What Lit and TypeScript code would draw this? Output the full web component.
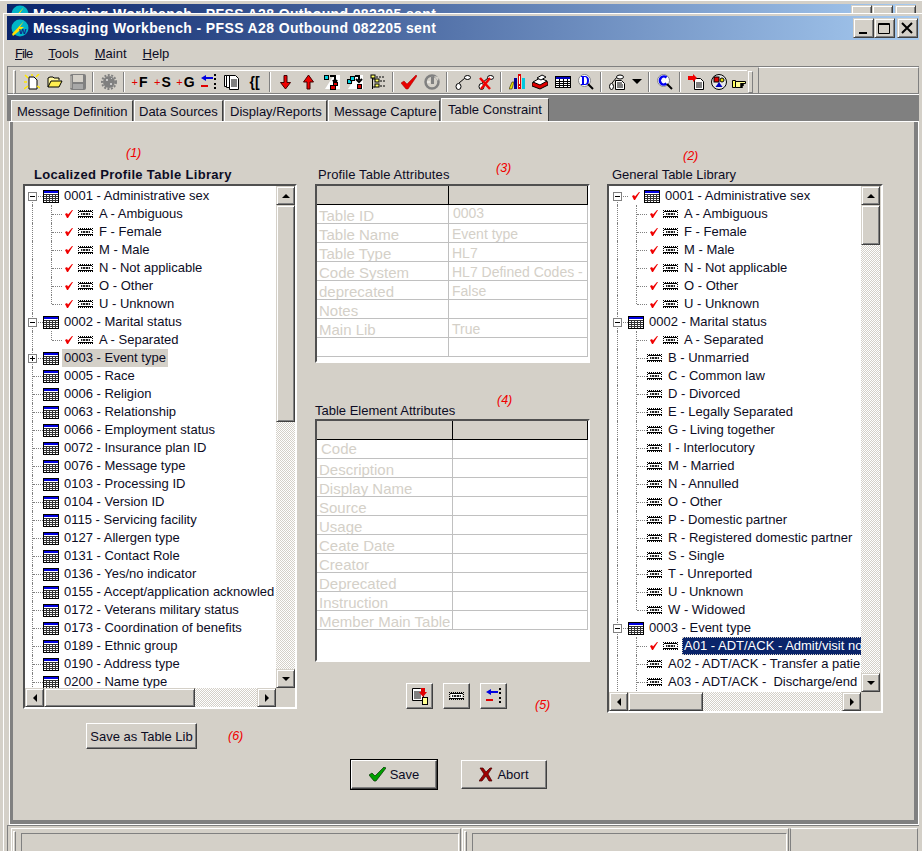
import { LitElement, css, html, svg } from "lit";
import { customElement } from "lit/decorators.js";

const tableIcon = () => html`<svg class="ico" width="16" height="13" viewBox="0 0 16 13">
  <rect x=".5" y=".5" width="15" height="12" fill="#fff" stroke="#000" />
  <rect x="1" y="1" width="14" height="2" fill="#0000e0" />
  <path d="M1 4.5h14M1 6.5h14M1 8.5h14M1 10.5h14M3.5 4v8M6.5 4v8M9.5 4v8M12.5 4v8" stroke="#333" fill="none" />
</svg>`;

const itemIcon = () => html`<svg class="ico" width="15" height="8" viewBox="0 0 15 8">
  <path d="M0 .5h15M0 7.5h15M.5 0v8M14.5 0v8" stroke="#000" stroke-dasharray="1 1" fill="none" />
  <rect x="1" y="1" width="13" height="1" fill="#000" />
  <rect x="1" y="6" width="13" height="1" fill="#000" />
  <rect x="2" y="2" width="11" height="4" fill="#fff" />
  <rect x="3" y="3" width="9" height="2" fill="#222" />
  <path d="M4.5 3v2M7.5 3v2M10.5 3v2" stroke="#bbb" />
</svg>`;

const checkIcon = () => html`<svg class="ico" width="8" height="8" viewBox="0 0 8 8">
  <path d="M0 4l2-1 1 1.500L7 0h1L3 8H2z" fill="#f00000" />
</svg>`;

const appIcon = () => html`<svg class="app" width="18" height="18" viewBox="0 0 18 18">
  <circle cx="9" cy="9" r="8.500" fill="#00b4c8" />
  <path d="M1 15L13 2 9 8l4 0L2 17z" fill="#ffe000" />
  <text x="8" y="15" font-size="8" font-weight="700" fill="#102080" font-family="Liberation Sans">W</text>
</svg>`;

type Row = {
  label: string;
  level: 0 | 1;
  box?: "+" | "-";
  check?: boolean;
  cls?: string;
  last?: boolean;
};

const group = (label: string, box: "+" | "-" | undefined = undefined, check = false): Row => ({ label, level: 0, box, check });
const leaf = (label: string, check = false, last = false, cls = ""): Row => ({ label, level: 1, check, last, cls });

const leftRows: Row[] = [
  group("0001 - Administrative sex", "-"),
  leaf("A - Ambiguous", true),
  leaf("F - Female", true),
  leaf("M - Male", true),
  leaf("N - Not applicable", true),
  leaf("O - Other", true),
  leaf("U - Unknown", true, true),
  group("0002 - Marital status", "-"),
  leaf("A - Separated", true, true),
  { ...group("0003 - Event type", "+"), cls: "current" },
  ...[
    "0005 - Race",
    "0006 - Religion",
    "0063 - Relationship",
    "0066 - Employment status",
    "0072 - Insurance plan ID",
    "0076 - Message type",
    "0103 - Processing ID",
    "0104 - Version ID",
    "0115 - Servicing facility",
    "0127 - Allergen type",
    "0131 - Contact Role",
    "0136 - Yes/no indicator",
    "0155 - Accept/application acknowled",
    "0172 - Veterans military status",
    "0173 - Coordination of benefits",
    "0189 - Ethnic group",
    "0190 - Address type",
    "0200 - Name type",
  ].map((l) => group(l)),
];

const rightRows: Row[] = [
  group("0001 - Administrative sex", "-", true),
  leaf("A - Ambiguous", true),
  leaf("F - Female", true),
  leaf("M - Male", true),
  leaf("N - Not applicable", true),
  leaf("O - Other", true),
  leaf("U - Unknown", true, true),
  group("0002 - Marital status", "-"),
  leaf("A - Separated", true),
  leaf("B - Unmarried"),
  leaf("C - Common law"),
  leaf("D - Divorced"),
  leaf("E - Legally Separated"),
  leaf("G - Living together"),
  leaf("I - Interlocutory"),
  leaf("M - Married"),
  leaf("N - Annulled"),
  leaf("O - Other"),
  leaf("P - Domestic partner"),
  leaf("R - Registered domestic partner"),
  leaf("S - Single"),
  leaf("T - Unreported"),
  leaf("U - Unknown"),
  leaf("W - Widowed", false, true),
  group("0003 - Event type", "-"),
  leaf("A01 - ADT/ACK - Admit/visit no", true, false, "selected"),
  leaf("A02 - ADT/ACK - Transfer a patie"),
  leaf("A03 - ADT/ACK - \u00a0Discharge/end"),
];

const profileAttrs = [
  ["Table ID", "0003"],
  ["Table Name", "Event type"],
  ["Table Type", "HL7"],
  ["Code System", "HL7 Defined Codes -"],
  ["deprecated", "False"],
  ["Notes", ""],
  ["Main Lib", "True"],
  ["", ""],
];

const elementAttrs = [
  "Code",
  "Description",
  "Display Name",
  "Source",
  "Usage",
  "Ceate Date",
  "Creator",
  "Deprecated",
  "Instruction",
  "Member Main Table",
];

// every toolbar glyph is drawn on the same 16 box and centred in a 23px slot
const tool = (body: unknown) => html`<span class="slot"><svg width="16" height="16" viewBox="0 0 16 16">${body}</svg></span>`;

const moveIcon = svg`
  <path d="M0 4l5-3v2h7v2H5v2z" fill="#0000e0" />
  <rect x="0" y="11" width="7" height="2" fill="#e00000" />
  <path d="M13 0h2v2h-2zM13 4h2v2h-2zM13 9h2v2h-2zM13 13h2v2h-2z" fill="#000" />`;

@customElement("app-root")
export class AppRoot extends LitElement {
  private tree(rows: Row[], kind: "left" | "right") {
    return html`
      <div class="sunken tree-frame ${kind}">
        <div class="tree-view">
          ${rows.map((r, i) => {
            const nested = r.level === 1;
            return html`<div class="row ${nested ? "nested" : ""} ${r.last ? "last" : ""} ${i === 0 ? "first" : ""}">
              <span class="rail"></span>
              ${nested ? html`<span class="rail2"></span>` : ""}
              <span class="lead">
                ${r.box ? html`<span class="box">${r.box === "-" ? html`<i></i>` : html`<i></i><b></b>`}</span>` : ""}
              </span>
              ${r.check ? html`<span class="chk">${checkIcon()}</span>` : ""}
              ${nested ? itemIcon() : tableIcon()}
              <span class="label ${r.cls ?? ""}">${r.label}</span>
            </div>`;
          })}
        </div>
        <div class="vbar">
          <button class="arrow"><span class="up"></span></button>
          <div class="vtrack"><div class="thumb"></div></div>
          <button class="arrow"><span class="down"></span></button>
        </div>
        <div class="hbar">
          <button class="arrow"><span class="lft"></span></button>
          <div class="htrack"><div class="thumb"></div></div>
          <button class="arrow"><span class="rgt"></span></button>
        </div>
      </div>
    `;
  }

  private toolbar() {
    return html`
      <div class="toolbar">
        <span class="grip"></span>
        <div class="tools">
          ${tool(svg`
            <path d="M5 3h5l3 3v9H5z" fill="#fff" stroke="#000" />
            <path d="M1 1l3 3M15 0l-3 3M0 15l4-3M16 14l-3-2M0 8h3M8 0v2" stroke="#ffe800" stroke-width="1.500" />`)}
          ${tool(svg`
            <path d="M1 13V4l2-1h3l1 1h5v2" fill="#fff7a0" stroke="#000" />
            <path d="M1 13l3-6h11l-3 6z" fill="#ffee50" stroke="#000" />`)}
          ${tool(svg`
            <rect x="0" y="0" width="16" height="16" rx="2" fill="#808080" />
            <rect x="3" y="1" width="10" height="7" fill="#d4d0c8" />
            <rect x="3" y="10" width="10" height="5" fill="#a8a8a8" />
            <path d="M1 2v12" stroke="#d4d0c8" />`)}
          <span class="sep"></span>
          ${tool(svg`
            <circle cx="8" cy="8" r="6" fill="#808080" />
            <circle cx="8" cy="8" r="7" fill="none" stroke="#808080" stroke-width="2" stroke-dasharray="2 1.500" />
            <path d="M5 5h2v2H5zM9 9h2v2H9zM10 4h1v1h-1z" fill="#c8c8c8" />`)}
          <span class="sep"></span>
          <span class="slot tx"><em>+</em>F</span>
          <span class="slot tx"><em>+</em>S</span>
          <span class="slot tx"><em>+</em>G</span>
          ${tool(moveIcon)}
          ${tool(svg`
            <path d="M.5 1.500h7v11h-7z" fill="#fff" stroke="#000" />
            <path d="M2.500 1.500h7v12h-7z" fill="#fff" stroke="#000" />
            <path d="M5.500 1.500h6l3 3v11h-9z" fill="#fff" stroke="#000" />
            <path d="M7 6h6M7 8h6M7 10h6M7 12h6" stroke="#000" />`)}
          <span class="slot tx brace">{[</span>
          <span class="sep"></span>
          ${tool(svg`<path d="M6 1.500h3v7h3.500L7.500 15 2.500 8.500H6z" fill="#f00000" stroke="#400000" />`)}
          ${tool(svg`<path d="M6 15h3V8h3.500L7.500 1 2.500 8H6z" fill="#f00000" stroke="#400000" />`)}
          ${tool(svg`
            <path d="M10 1h6v14H1z" fill="#fff" />
            <rect x=".5" y="1.500" width="4" height="4" fill="#00d0e0" stroke="#000" />
            <path d="M6 2h5v5M9 6l2 3 2-3" fill="none" stroke="#000" stroke-width="2" />
            <rect x="9.500" y="8.500" width="4" height="3" fill="#e00000" stroke="#000" />
            <rect x="6.500" y="11.500" width="5" height="4" fill="#e00000" stroke="#000" />`)}
          ${tool(svg`
            <path d="M10 1h6v14H1z" fill="#fff" />
            <rect x=".5" y="5.500" width="4" height="4" fill="#00d0e0" stroke="#000" />
            <rect x="3.500" y="2.500" width="4" height="4" fill="#00d0e0" stroke="#000" />
            <path d="M8 2h4v4M9 5l3 3 3-3" fill="none" stroke="#000" stroke-width="2" />
            <rect x="10.500" y="10.500" width="4" height="4" fill="#e00000" stroke="#000" />`)}
          ${tool(svg`
            <path d="M2.500 1v14M2 5h3M2 13h3" stroke="#000" fill="none" />
            <rect x="1" y="1" width="4" height="3" fill="#ffff60" stroke="#000" />
            <rect x="5" y="5" width="4" height="3" fill="#ffff60" stroke="#000" />
            <rect x="5" y="10" width="4" height="3" fill="#ffff60" stroke="#000" />
            <path d="M6 3h9M10 7h6M10 12h6" stroke="#000" stroke-dasharray="2 1" />`)}
          <span class="sep"></span>
          ${tool(svg`<path d="M0 9l3-2 3 3L15 1l1 1L7 15H5z" fill="#e80000" stroke="#a00000" stroke-width=".5" />`)}
          ${tool(svg`
            <circle cx="8" cy="8" r="6.500" fill="#d4d0c8" stroke="#808080" stroke-width="2.500" />
            <path d="M7 3h3v7H7z" fill="#808080" />
            <path d="M10 2l5 1-1 4z" fill="#d4d0c8" />
            <path d="M3 8h3" stroke="#fff" />`)}
          <span class="sep"></span>
          ${tool(svg`
            <ellipse cx="3.500" cy="12.500" rx="2.500" ry="3" fill="#fff" stroke="#000" />
            <path d="M4 9l6-5" stroke="#000" />
            <ellipse cx="12.500" cy="3.500" rx="3" ry="2" fill="#fff" stroke="#000" />`)}
          ${tool(svg`
            <ellipse cx="3.500" cy="12.500" rx="2.500" ry="3" fill="#fff" stroke="#000" />
            <path d="M4 9l6-5" stroke="#000" />
            <ellipse cx="12.500" cy="3.500" rx="3" ry="2" fill="#fff" stroke="#000" />
            <path d="M2 4l10 11M12 4L3 15" stroke="#f00000" stroke-width="2.500" />`)}
          <span class="sep"></span>
          ${tool(svg`
            <path d="M0 15l3-7h2l-2 7z" fill="#e8e000" stroke="#000" stroke-width=".5" />
            <rect x="5" y="4" width="3" height="11" fill="#000090" />
            <rect x="9" y="0" width="3" height="15" fill="#e00000" />
            <path d="M10.500 2v8M10.500 12v1" stroke="#fff" />
            <rect x="13" y="4" width="3" height="11" fill="#00c8e0" />`)}
          ${tool(svg`
            <path d="M0 9l7-3 9 2v3l-8 4-8-3z" fill="#e00000" stroke="#000" />
            <path d="M1 8l7-4 7 3-7 4z" fill="#fff" stroke="#000" />
            <path d="M5 4l5-3 4 2-5 3z" fill="#fff" stroke="#000" />`)}
          ${tool(svg`
            <rect x=".5" y="2.500" width="15" height="11" fill="#fff" stroke="#000" />
            <rect x="1" y="3" width="14" height="2" fill="#0000c0" />
            <path d="M1 7.500h14M1 9.500h14M1 11.500h14M4.500 5v8M8.500 5v8M12.500 5v8" stroke="#000" />`)}
          ${tool(svg`
            <circle cx="6.500" cy="6.500" r="6" fill="#fff" stroke="#888" />
            <path d="M10 10l5 5" stroke="#000" stroke-width="2" />
            <path d="M3 2h4q4 0 4 4.500T7 11H3V10h1V3H3zM6 3v7h1q2 0 2-3.500T7 3z" fill="#0000f0" />`)}
          <span class="sep"></span>
          ${tool(svg`
            <ellipse cx="2.500" cy="12.500" rx="2" ry="3" fill="#fff" stroke="#000" />
            <path d="M3 9l5-6" stroke="#000" />
            <ellipse cx="11" cy="3" rx="3.500" ry="2" fill="#fff" stroke="#000" />
            <path d="M6.500 6.500h6l3 3v6h-9z" fill="#fff" stroke="#000" />
            <path d="M8 9h5M8 11h6M8 13h6" stroke="#000" />`)}
          <span class="caret-slot"><span class="caret"></span></span>
          <span class="sep"></span>
          ${tool(svg`
            <circle cx="6.500" cy="6.500" r="6" fill="#fff" stroke="#888" />
            <path d="M9.500 3.500a4 4 0 1 0 0 6" fill="none" stroke="#0000f0" stroke-width="2.500" />
            <path d="M10 10l5 5" stroke="#000" stroke-width="2" />`)}
          <span class="sep"></span>
          ${tool(svg`
            <path d="M6.500 4.500h6l3 3v8h-9z" fill="#fff" stroke="#000" />
            <path d="M8 9h6M8 11h6M8 13h6" stroke="#000" />
            <path d="M0 2h5V0l4 4-4 4V6H0z" fill="#f00000" />`)}
          ${tool(svg`
            <circle cx="8" cy="8" r="7.500" fill="#e8e8e8" stroke="#000" />
            <rect x="3" y="3" width="5" height="5" fill="#e00000" stroke="#000" />
            <circle cx="11" cy="6" r="2" fill="#e8e000" stroke="#000" />
            <path d="M8 8l3.500 5h-7z" fill="#0000c0" />`)}
          <span class="slot last">
            <svg width="16" height="16" viewBox="0 0 16 16">
              <path d="M1.500 6.500h3v7h-3z" fill="#ffff60" stroke="#000" />
              <path d="M4.500 7.500h10v2h-5v1h3v1h-3v1h2v1h-7z" fill="#ffff90" stroke="#000" />
            </svg>
          </span>
        </div>
        <span class="handle"></span>
        <div class="toolbar-rest"></div>
      </div>
    `;
  }

  private windowButtons(withGlyphs: boolean) {
    if (!withGlyphs) return html`<span class="capbtns"><span class="cap"></span><span class="cap"></span><span class="cap close"></span></span>`;
    return html`<span class="capbtns">
      <span class="cap"><svg width="15" height="13" viewBox="0 0 15 13"><path d="M3 10h8v2H3z" /></svg></span>
      <span class="cap"><svg width="15" height="13" viewBox="0 0 15 13"><path d="M1.500 1.500h11v10h-11z M1 2.500h12" fill="none" stroke="#000" /></svg></span>
      <span class="cap close"><svg width="15" height="13" viewBox="0 0 15 13"><path d="M2 1l10 10M12 1L2 11" stroke="#000" stroke-width="2" /></svg></span>
    </span>`;
  }

  render() {
    const check = svg`<path d="M0 8l3-2 3 3L15 0l2 1L7 14H5z" fill="#00a000" stroke="#003000" stroke-width=".7" />`;
    const cross = svg`<path d="M1 1h3l3 4 4-4h2l-4 6 4 7h-3L7 9l-4 5H0l5-7z" fill="#a00000" stroke="#400000" stroke-width=".7" />`;
    return html`
      <div class="back">
        <div class="back-title">
          ${appIcon()}
          <span class="back-text">Messaging Workbench - PFSS A28 Outbound 082205 sent</span>
          ${this.windowButtons(false)}
        </div>
      </div>
      <div class="window">
        <div class="title">
          ${appIcon()}
          <span class="title-text">Messaging Workbench - PFSS A28 Outbound 082205 sent</span>
          ${this.windowButtons(true)}
        </div>
        <div class="menu">
          <span><u>F</u>ile</span><span><u>T</u>ools</span><span><u>M</u>aint</span><span><u>H</u>elp</span>
        </div>
        ${this.toolbar()}
        <div class="tabs">
          <span class="tab t-def">Message Definition</span>
          <span class="tab t-src">Data Sources</span>
          <span class="tab t-rep">Display/Reports</span>
          <span class="tab t-cap">Message Capture</span>
          <span class="tab active">Table Constraint</span>
        </div>
        <div class="panel">
          <div class="columns">
            <section class="col">
              <h3 class="bold">Localized Profile Table Library</h3>
              ${this.tree(leftRows, "left")}
              <button class="btn lib">Save as Table Lib</button>
            </section>
            <section class="col mid">
              <h3 class="t1">Profile Table Attributes</h3>
              <div class="sunken grid g1">
                <div class="gh"><span></span><span></span></div>
                ${profileAttrs.map(
                  ([a, b], i) => html`<div class="gr ${i === 0 ? "first" : ""}"><span>${a}</span><span>${b}</span></div>`
                )}
              </div>
              <h3 class="t2">Table Element Attributes</h3>
              <div class="sunken grid g2">
                <div class="gh"><span></span><span></span></div>
                ${elementAttrs.map((a, i) => html`<div class="gr ${i === 0 ? "first" : ""}"><span>${a}</span><span></span></div>`)}
              </div>
              <div class="minis">
                <button class="btn mini">
                  <svg width="18" height="18" viewBox="0 0 18 18">
                    <path d="M1.500 1.500h8l3 3v9h-11z" fill="#fff" stroke="#000" />
                    <path d="M3 5h7M3 7h7M3 9h7M3 11h7" stroke="#000" />
                    <path d="M10 1h4v4h2l-4 5-4-5h2z" fill="#e00000" />
                    <rect x="11.500" y="10.500" width="5" height="7" fill="#ffff90" stroke="#000" />
                  </svg>
                </button>
                <button class="btn mini">${itemIcon()}</button>
                <button class="btn mini"><svg width="16" height="16" viewBox="0 0 16 16">${moveIcon}</svg></button>
              </div>
            </section>
            <section class="col">
              <h3 class="t3">General Table Library</h3>
              ${this.tree(rightRows, "right")}
            </section>
          </div>
          <div class="actions">
            <button class="btn big default"><svg width="17" height="15" viewBox="0 0 17 15">${check}</svg>Save</button>
            <button class="btn big"><svg width="14" height="15" viewBox="0 0 14 15">${cross}</svg>Abort</button>
          </div>
          <span class="note n1">(1)</span>
          <span class="note n2">(2)</span>
          <span class="note n3">(3)</span>
          <span class="note n4">(4)</span>
          <span class="note n5">(5)</span>
          <span class="note n6">(6)</span>
        </div>
        <div class="status">
          <span class="cell a"><span class="cell-grip"></span><span class="cell-in"></span></span>
          <span class="cell b"><span class="cell-grip"></span><span class="cell-in"></span></span>
          <span class="cell c"></span>
        </div>
      </div>
    `;
  }

  static styles = css`
    :host {
      display: block;
      width: 922px;
      height: 851px;
      overflow: hidden;
      background: #d4d0c8;
      font-family: "Liberation Sans", Arial, sans-serif;
      font-size: 13px;
      color: #0c0c24;
    }

    button {
      font: inherit;
      color: inherit;
      margin: 0;
      padding: 0;
    }

    .back {
      height: 13px;
      padding: 3px 6px 0 7px;
      box-sizing: border-box;
      border-top: 1px solid #fff;
      overflow: hidden;
    }

    .back-title {
      display: flex;
      align-items: flex-start;
      gap: 4px;
      height: 24px;
      padding: 1px 0 0 4px;
      box-sizing: border-box;
      background: linear-gradient(90deg, #0a246a, #a6caf0);
    }

    .back-text,
    .title-text {
      flex: 1;
      color: #fff;
      font-weight: 700;
      font-size: 14px;
      letter-spacing: 0.37px;
      white-space: nowrap;
    }

    /* only the top of the window behind shows above the main window */
    .back-text {
      height: 7px;
      margin-top: 1px;
      line-height: 16px;
      overflow: hidden;
    }

    .app {
      flex: none;
    }

    .window {
      height: 838px;
      box-sizing: border-box;
      margin-left: 3px;
      padding: 2px 3px 0 3px;
      border-top: 1px solid #fff;
      border-left: 1px solid #fff;
      display: flex;
      flex-direction: column;
    }

    .title {
      display: flex;
      align-items: center;
      gap: 4px;
      height: 24px;
      flex: none;
      padding: 0 1px 0 4px;
      background: linear-gradient(90deg, #0a246a, #a6caf0);
    }

    .capbtns {
      display: flex;
      flex: none;
    }

    .cap {
      display: flex;
      align-items: center;
      justify-content: center;
      width: 21px;
      height: 20px;
      box-sizing: border-box;
      background: #d4d0c8;
      border: 1px solid;
      border-color: #d4d0c8 #404040 #404040 #d4d0c8;
      box-shadow: inset 1px 1px 0 #fff, inset -1px -1px 0 #808080;
    }

    .cap.close {
      margin-left: 2px;
    }

    .menu {
      display: flex;
      flex: none;
      height: 26px;
      align-items: center;
      gap: 16px;
      padding-left: 8px;
    }

    .menu span:first-child {
      letter-spacing: -0.9px;
    }

    .toolbar {
      display: flex;
      flex: none;
      height: 29px;
      box-sizing: border-box;
      padding-top: 3px;
      border-top: 1px solid #808080;
      border-left: 1px solid #808080;
      border-bottom: 1px solid #fff;
      box-shadow: inset 0 -1px 0 #808080;
    }

    .grip {
      flex: none;
      width: 1px;
      height: 22px;
      margin: 0 4px 0 5px;
      border: 1px solid;
      border-color: #fff #808080 #808080 #fff;
    }

    .tools {
      display: flex;
      flex: none;
      align-items: center;
      width: 727px;
      height: 23px;
      padding-bottom: 1px;
      box-sizing: border-box;
      border-top: 1px solid #fff;
    }

    .slot {
      display: flex;
      flex: none;
      align-items: center;
      justify-content: center;
      width: 23px;
    }

    .slot.last {
      width: 18px;
    }

    .tx {
      font-size: 14px;
      font-weight: 700;
      color: #000;
      white-space: nowrap;
    }

    .tx em {
      font-style: normal;
      font-weight: 400;
      color: #e00000;
      font-size: 11px;
      margin-right: 1px;
    }

    .sep {
      flex: none;
      width: 2px;
      height: 20px;
      margin: 0 3px;
      box-sizing: border-box;
      border-left: 1px solid #808080;
      border-right: 1px solid #fff;
    }

    .caret-slot {
      display: flex;
      flex: none;
      justify-content: center;
      width: 17px;
    }

    .caret {
      width: 0;
      height: 0;
      border: 5px solid transparent;
      border-top-color: #000;
      border-bottom: 0;
    }

    .handle {
      flex: none;
      width: 3px;
      height: 20px;
      margin: 1px 5px 0 1px;
      border: 1px solid;
      border-color: #fff #808080 #808080 #fff;
    }

    .toolbar-rest {
      flex: 1;
      margin-top: -3px;
      margin-bottom: 1px;
      border-left: 1px solid #808080;
      border-right: 1px solid #808080;
      border-top: 1px solid #fff;
    }

    .tabs {
      display: flex;
      flex: none;
      height: 26px;
      padding-left: 4px;
      box-sizing: border-box;
      align-items: flex-end;
      background: #808080;
    }

    .tab {
      height: 21px;
      line-height: 22px;
      box-sizing: border-box;
      margin-right: 1px;
      padding-left: 5px;
      white-space: nowrap;
      background: #d4d0c8;
      border-top: 1px solid #fff;
      border-left: 1px solid #fff;
      border-right: 1px solid #404040;
    }

    .t-def {
      width: 122px;
    }

    .t-src {
      width: 89px;
      padding-left: 4px;
    }

    .t-rep {
      width: 103px;
    }

    .t-cap {
      width: 112px;
    }

    .tab.active {
      width: 108px;
      height: 23px;
      line-height: 21px;
      padding-left: 6px;
    }

    .panel {
      position: relative;
      flex: 1;
      min-height: 0;
      box-sizing: border-box;
      margin: 1px 1px 1px 3px;
      padding-left: 10px;
      border-style: solid;
      border-color: #808080;
      border-width: 0 4px 4px 3px;
      box-shadow: 0 0 0 1px #fff;
    }

    .columns {
      display: grid;
      grid-template-columns: 275px 275px 276px;
      column-gap: 17px;
    }

    .col {
      display: flex;
      flex-direction: column;
      align-items: flex-start;
    }

    h3 {
      margin: 0;
      font-size: 13px;
      font-weight: 400;
      white-space: nowrap;
      line-height: 16px;
    }

    h3.bold {
      font-weight: 700;
      letter-spacing: 0.33px;
      margin: 45px 0 1px 11px;
    }

    h3.t1 {
      letter-spacing: 0.1px;
      margin: 45px 0 1px 3px;
    }

    h3.t2 {
      margin: 40px 0 0 0;
    }

    h3.t3 {
      margin: 45px 0 1px 5px;
    }

    .sunken {
      box-sizing: border-box;
      border: 2px solid;
      border-color: #505050 #fff #fff #505050;
    }

    .tree-frame {
      display: grid;
      grid-template-columns: 1fr 19px;
      grid-template-rows: 1fr 19px;
      background: #d4d0c8;
      width: 274px;
      height: 525px;
    }

    .tree-frame.right {
      width: 276px;
      height: 529px;
      padding-right: 1px;
    }

    .tree-view {
      overflow: hidden;
      min-width: 0;
      padding-top: 1px;
      background: #fff;
    }

    .right .tree-view {
      padding-left: 1px;
    }

    .row {
      position: relative;
      display: flex;
      align-items: center;
      height: 18px;
      padding-left: 3px;
      white-space: nowrap;
    }

    .rail,
    .rail2 {
      position: absolute;
      top: 0;
      bottom: 0;
      border-left: 1px dotted #808080;
    }

    .rail {
      left: 7px;
    }

    .rail2 {
      left: 26px;
    }

    .row.first .rail {
      top: 9px;
    }

    .row.last .rail2 {
      bottom: 9px;
    }

    .lead {
      position: relative;
      flex: none;
      align-self: stretch;
      width: 15px;
    }

    .nested .lead {
      width: 34px;
    }

    .lead::after {
      content: "";
      position: absolute;
      left: 5px;
      right: 0;
      top: 9px;
      border-top: 1px dotted #808080;
    }

    .nested .lead::after {
      left: 24px;
    }

    .box {
      position: absolute;
      z-index: 1;
      left: 0;
      top: 5px;
      width: 9px;
      height: 9px;
      box-sizing: border-box;
      background: #fff;
      border: 1px solid #808080;
    }

    .box i {
      position: absolute;
      left: 1px;
      top: 3px;
      width: 5px;
      height: 1px;
      background: #000;
    }

    .box b {
      position: absolute;
      left: 3px;
      top: 1px;
      width: 1px;
      height: 5px;
      background: #000;
    }

    .ico {
      flex: none;
      position: relative;
    }

    .row > .ico {
      margin-right: 3px;
    }

    .nested > .ico {
      margin-right: 4px;
    }

    .chk {
      display: flex;
      flex: none;
      width: 8px;
      margin: 0 4px 0 4px;
    }

    .nested .chk {
      margin: 0 5px 0 3px;
    }

    .label {
      padding: 0 2px;
      line-height: 18px;
    }

    .label.current {
      background: #d4d0c8;
    }

    .label.selected {
      flex: 1;
      background: #0a246a;
      color: #fff;
      outline: 1px dotted #d4d0c8;
      outline-offset: -1px;
    }

    .vbar,
    .hbar {
      display: flex;
      background: repeating-conic-gradient(#fff 0 25%, #d4d0c8 0 50%) 0 0 / 2px 2px;
    }

    .vbar {
      flex-direction: column;
    }

    .arrow {
      display: flex;
      flex: none;
      align-items: center;
      justify-content: center;
      width: 19px;
      height: 19px;
      box-sizing: border-box;
      background: #d4d0c8;
      border: 1px solid;
      border-color: #d4d0c8 #404040 #404040 #d4d0c8;
      box-shadow: inset 1px 1px 0 #fff, inset -1px -1px 0 #808080;
    }

    .up,
    .down,
    .lft,
    .rgt {
      width: 0;
      height: 0;
      border: 4px solid transparent;
    }

    .up {
      border-top: 0;
      border-bottom-color: #000;
    }

    .down {
      border-bottom: 0;
      border-top-color: #000;
    }

    .lft {
      border-left: 0;
      border-right-color: #000;
    }

    .rgt {
      border-right: 0;
      border-left-color: #000;
    }

    .vtrack,
    .htrack {
      flex: 1;
    }

    .thumb {
      box-sizing: border-box;
      background: #d4d0c8;
      border: 1px solid;
      border-color: #d4d0c8 #404040 #404040 #d4d0c8;
      box-shadow: inset 1px 1px 0 #fff, inset -1px -1px 0 #808080;
    }

    .vtrack .thumb {
      height: 217px;
    }

    .right .vtrack .thumb {
      height: 40px;
    }

    .htrack .thumb {
      width: 151px;
      height: 19px;
    }

    .right .htrack .thumb {
      width: 75px;
    }

    .grid {
      width: 275px;
      background: #fff;
      overflow: hidden;
      color: #d4d0c8;
      font-size: 14px;
    }

    .g1 {
      height: 179px;
    }

    .g2 {
      height: 243px;
    }

    .gh,
    .gr {
      display: grid;
      box-sizing: border-box;
      height: 19px;
    }

    .g1 .gh,
    .g1 .gr {
      grid-template-columns: 132px 1fr;
    }

    .g2 .gh,
    .g2 .gr {
      grid-template-columns: 136px 1fr;
    }

    .gh {
      background: #d4d0c8;
      border-bottom: 1px solid #000;
    }

    .gh span {
      border-right: 1px solid #000;
    }

    .gr {
      border-bottom: 1px solid #c0c0c0;
    }

    .gr span {
      padding-left: 3px;
      line-height: 21px;
      white-space: nowrap;
      overflow: hidden;
      border-right: 1px solid #c0c0c0;
    }

    .gr span:first-child {
      padding-left: 2px;
      font-size: 15px;
    }

    .g1 .gr.first span:last-child {
      padding-left: 4px;
      line-height: 17px;
    }

    .g2 .gr.first span:first-child {
      padding-left: 4px;
      line-height: 18px;
    }

    .minis {
      display: flex;
      gap: 10px;
      margin: 21px 0 0 91px;
    }

    .btn {
      display: flex;
      align-items: center;
      justify-content: center;
      box-sizing: border-box;
      background: #d4d0c8;
      border: 1px solid;
      border-color: #fff #404040 #404040 #fff;
      box-shadow: inset -1px -1px 0 #808080;
    }

    .mini {
      width: 27px;
      height: 26px;
    }

    .lib {
      width: 111px;
      height: 26px;
      margin: 14px 0 0 63px;
    }

    .actions {
      display: flex;
      gap: 24px;
      margin: 11px 0 0 328px;
    }

    .big {
      width: 86px;
      height: 29px;
      gap: 4px;
    }

    .big.default {
      outline: 1px solid #000;
    }

    .note {
      position: absolute;
      color: #f00000;
      font-style: italic;
      font-size: 12.5px;
      line-height: 14px;
    }

    .n1 {
      left: 113px;
      top: 24px;
    }

    .n2 {
      left: 670px;
      top: 27px;
    }

    .n3 {
      left: 483px;
      top: 39px;
    }

    .n4 {
      left: 484px;
      top: 271px;
    }

    .n5 {
      left: 522px;
      top: 576px;
    }

    .n6 {
      left: 215px;
      top: 607px;
    }

    .status {
      display: flex;
      flex: none;
      height: 26px;
      box-sizing: border-box;
      padding: 2px 0 0 3px;
      border-top: 1px solid #808080;
      border-left: 1px solid #808080;
    }

    .cell {
      display: flex;
      box-sizing: border-box;
      height: 30px;
      margin-right: 1px;
      border-top: 1px solid #fff;
      border-left: 1px solid #fff;
      border-right: 1px solid #808080;
    }

    .cell-grip {
      flex: none;
      width: 1px;
      height: 24px;
      margin: 2px 5px 0 1px;
      border: 1px solid;
      border-color: #fff #808080 #808080 #fff;
    }

    .cell-in {
      flex: 1;
      margin: 4px 1px 0 0;
      border-top: 1px solid #808080;
      border-left: 1px solid #808080;
      border-right: 1px solid #fff;
    }

    .cell.a {
      width: 450px;
    }

    .cell.b {
      width: 327px;
    }

    .cell.c {
      flex: 1;
      border-left-color: #808080;
    }
  `;
}
